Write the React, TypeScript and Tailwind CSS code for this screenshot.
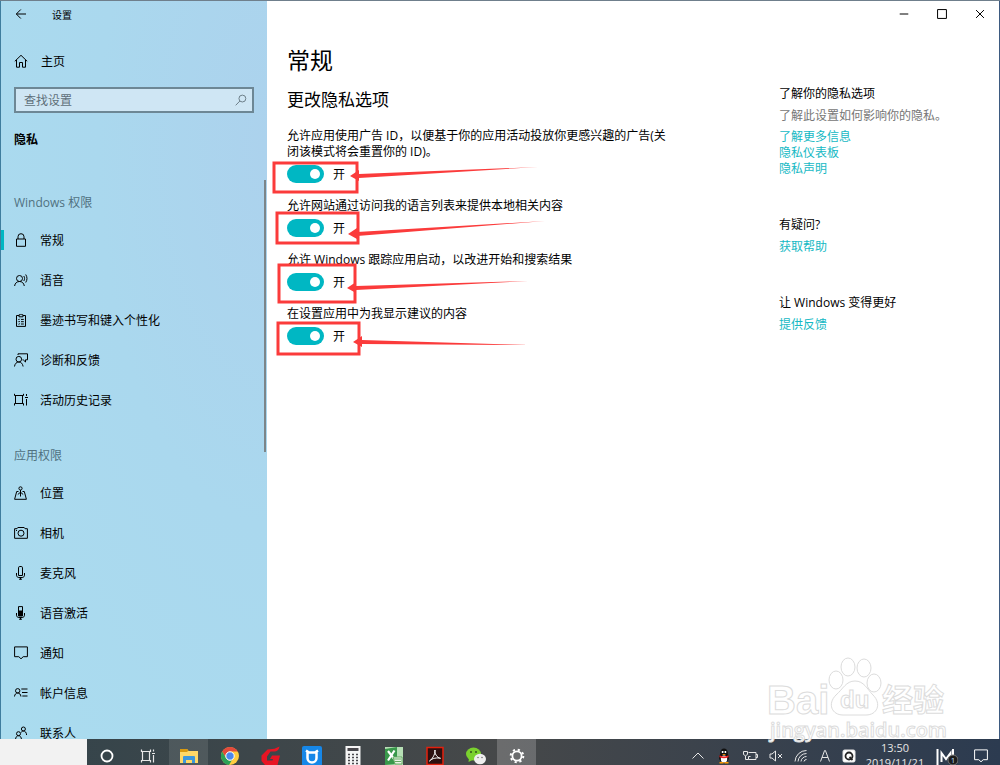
import { useState } from "react";
import type { ReactNode } from "react";

function Icon({ children, size = 14 }: { children: ReactNode; size?: number }) {
  return (
    <svg
      width={size}
      height={size}
      viewBox="0 0 14 14"
      fill="none"
      stroke="currentColor"
      strokeWidth="1"
      className="shrink-0"
      aria-hidden="true"
    >
      {children}
    </svg>
  );
}

const icons = {
  back: <path d="M12 7H2.500M6.800 2.500 2.300 7l4.500 4.500" />,
  home: <path d="M.8 7.300 7 1.300l6.200 6M2.500 6v7.200h3V8.500h3v4.700h3V6" />,
  lock: <path d="M2.500 6h9v7.300h-9zM4 6V3.700a3 3 0 0 1 6 0V6" />,
  speech: (
    <path d="M5.500 8.500a3 3 0 1 0 0-6 3 3 0 0 0 0 6ZM.6 13c.3-2.800 2.300-4.500 4.900-4.500s4.400 1.700 4.800 4.500M9.800 3c1 1.600 1 3.400 0 5M11.700 1.500c1.700 2.600 1.700 5.400 0 8" />
  ),
  clipboard: (
    <path d="M5 2.500H2.500v10.900h9V2.500H9M5 1.800h1.200a.9.900 0 0 1 1.600 0H9v2H5zM4.300 6.200l.6.600.8-1M4.300 8.500l.6.600.8-1M4.300 10.800l.6.600.8-1M7 6.400h2.800M7 8.700h2.800M7 11h2.800" />
  ),
  feedback: (
    <path d="M4.800 9a2.800 2.800 0 1 0 0-5.600 2.800 2.800 0 0 0 0 5.600ZM.5 13.500C.8 10.800 2.500 9 4.800 9s3.900 1.700 4.300 4.500M4 2V.8h9.500v6h-2V9L9.200 6.800H8.500" />
  ),
  timeline: (
    <path d="M.5.8v1.700h9V.8M1.500 2.500v8M8.500 2.500v8M.5 12.500v-2h9v2M12.500 1v2M12.500 6v6.500M11 4.500h3" />
  ),
  location: (
    <path d="M6.500 4a1.600 1.600 0 1 0 0-3.200 1.600 1.600 0 0 0 0 3.200ZM6.500 4v6.500M4.500 5.500H2.700L.6 13.300h11.800l-2.100-7.800H8.500M3.800 8.500l2.700-2.300 2.700 2.300" />
  ),
  camera: (
    <path d="M.6 2.700H3l.8-1.200h6.400l.8 1.200h2.400v9.600H.6zM7 10.200a3 3 0 1 0 0-6 3 3 0 0 0 0 6ZM2 4.500h1" />
  ),
  mic: (
    <path d="M4.500 1.800q0-1.300 1.300-1.300h1.400q1.300 0 1.300 1.300v7.700h-4zM2.500 7v2.200c0 1.200.9 2.300 2.300 2.300h3.400c1.400 0 2.300-1.100 2.300-2.300V7M6.500 11.500v2M5 13.200h3" />
  ),
  voice: (
    <>
      <path d="M4.500.6h4v8.900h-4zM2.500 7v2.200c0 1.200.9 2.300 2.300 2.300h3.400c1.400 0 2.300-1.100 2.300-2.300V7M6.500 11.500v2M5 13.200h3" />
      <path d="M4.500 5h4v5h-4z" fill="currentColor" />
    </>
  ),
  message: <path d="M.6.900h12.800v9.800H9.200L7 12.800l-2.200-2.100H.6z" />,
  account: (
    <path d="M3.700 7a2.200 2.200 0 1 0 0-4.400 2.200 2.200 0 0 0 0 4.400ZM.5 10.500C.7 8.300 2 7 3.700 7s3 1.300 3.200 3.500M7.300 3H13.500M8 6.500h5.500M8.300 10h5.200" />
  ),
  people: (
    <path d="M4.500 9.700a2 2 0 1 0 0-4 2 2 0 0 0 0 4ZM1.500 13.500c.2-2.400 1.300-3.800 3-3.800s2.800 1.400 3 3.800M9.400 5a2 2 0 1 0 0-4 2 2 0 0 0 0 4ZM7 6.500C7.600 5.500 8.400 5 9.400 5c1.900 0 3 1.500 3.200 4" />
  ),
};

type IconName = keyof typeof icons;

const groups: { title: string; items: { icon: IconName; label: string }[] }[] = [
  {
    title: "Windows 权限",
    items: [
      { icon: "lock", label: "常规" },
      { icon: "speech", label: "语音" },
      { icon: "clipboard", label: "墨迹书写和键入个性化" },
      { icon: "feedback", label: "诊断和反馈" },
      { icon: "timeline", label: "活动历史记录" },
    ],
  },
  {
    title: "应用权限",
    items: [
      { icon: "location", label: "位置" },
      { icon: "camera", label: "相机" },
      { icon: "mic", label: "麦克风" },
      { icon: "voice", label: "语音激活" },
      { icon: "message", label: "通知" },
      { icon: "account", label: "帐户信息" },
      { icon: "people", label: "联系人" },
    ],
  },
];

const options = [
  "允许应用使用广告 ID，以便基于你的应用活动投放你更感兴趣的广告(关闭该模式将会重置你的 ID)。",
  "允许网站通过访问我的语言列表来提供本地相关内容",
  "允许 Windows 跟踪应用启动，以改进开始和搜索结果",
  "在设置应用中为我显示建议的内容",
];

function Sidebar() {
  const [active, setActive] = useState("常规");

  return (
    <aside className="flex w-[267px] shrink-0 flex-col border-l border-[#3f7d9e] bg-[radial-gradient(ellipse_at_100%_20%,#acd2ed_0%,#aad8ee_45%,#aadcef_100%)]">
      <header className="flex h-[26px] items-center pl-[13px]">
        <button aria-label="返回">
          <Icon>{icons.back}</Icon>
        </button>
        <span className="ml-6 pt-0.5 text-[10px]">设置</span>
      </header>
      <a href="#home" className="mt-[14px] flex h-10 items-center gap-[13px] pl-[13px]">
        <Icon>{icons.home}</Icon>
        <span className="pt-0.5">主页</span>
      </a>
      <div className="mx-[13px] mt-[6px] flex h-[26px] shrink-0 items-center border-2 border-[#6d8795] bg-[#cfe6f4] pr-[5px] pl-2 text-[#5e6f79]">
        <input
          type="search"
          aria-label="查找设置"
          placeholder="查找设置"
          className="min-w-0 flex-1 bg-transparent pt-0.5 outline-none placeholder:text-[#5e6f79]"
        />
        <Icon size={12}>
          <path d="M8.600 9.300a4 4 0 1 0 0-8 4 4 0 0 0 0 8ZM5.700 8.200.8 13.200" />
        </Icon>
      </div>
      <h2 className="mt-[6px] flex h-10 shrink-0 items-center pt-0.5 pl-[13px] font-bold">隐私</h2>
      <div className="mt-[21px] flex min-h-0 flex-1 overflow-hidden">
        <nav className="flex-1">
          {groups.map((group) => (
            <section key={group.title} className="mb-[13px]">
              <h3 className="flex h-10 items-center pt-1.5 pl-[13px] text-[#50717f]">{group.title}</h3>
              {group.items.map((item) => (
                <button
                  key={item.label}
                  onClick={() => setActive(item.label)}
                  className="flex h-10 w-full items-center"
                >
                  <span className={item.label === active ? "h-5 w-[3px] bg-[#00b7c3]" : "h-5 w-[3px]"} />
                  <span className="ml-[10px]">
                    <Icon>{icons[item.icon]}</Icon>
                  </span>
                  <span className="ml-3 pt-0.5">{item.label}</span>
                </button>
              ))}
            </section>
          ))}
        </nav>
        <div className="mr-px h-[272px] w-[2px] bg-[#7c8589]" />
      </div>
    </aside>
  );
}

function Toggle({ label }: { label: string }) {
  const [on, setOn] = useState(true);

  return (
    <label className="mb-[10px] flex h-7 items-center gap-[9px]">
      <input
        type="checkbox"
        role="switch"
        aria-label={label}
        checked={on}
        onChange={() => setOn(!on)}
        className="flex h-[18px] w-[37px] appearance-none items-center rounded-full bg-[#767676] px-1 before:size-[10px] before:rounded-full before:bg-white before:content-[''] checked:justify-end checked:bg-[#00b7c3]"
      />
      <span className="pt-0.5">{on ? "开" : "关"}</span>
    </label>
  );
}

const marks = [
  { x: 274, y: 163, w: 83, h: 29, tip: [350, 176], end: [538, 167] },
  { x: 277, y: 213, w: 81, h: 30, tip: [348, 234], end: [545, 221] },
  { x: 279, y: 265, w: 76, h: 37, tip: [347, 288], end: [528, 281] },
  { x: 278, y: 323, w: 81, h: 31, tip: [353, 342], end: [529, 345] },
];

// hand-drawn highlight boxes and arrows over the switches
function Marks() {
  return (
    <svg
      className="pointer-events-none absolute top-0 left-0"
      width="300"
      height="380"
      viewBox="267 1 300 380"
      aria-hidden="true"
    >
      {marks.map(({ x, y, w, h, tip: [tx, ty], end: [ex, ey] }) => (
        <g key={y} fill="#fb3b3b">
          <rect x={x} y={y} width={w} height={h} fill="none" stroke="#fb3b3b" strokeWidth="3" />
          <path
            d={`M${tx} ${ty}L${tx + 9} ${ty - 6}L${tx + 9} ${ty - 2}L${ex} ${ey}L${tx + 9} ${ty + 2}L${tx + 9} ${ty + 5}Z`}
          />
        </g>
      ))}
    </svg>
  );
}

function Help() {
  return (
    <div className="mt-[59px] flex w-[220px] shrink-0 flex-col leading-4">
      <h3>了解你的隐私选项</h3>
      <p className="mt-[6px] text-[#767676]">了解此设置如何影响你的隐私。</p>
      <div className="mt-[5px] flex flex-col items-start text-[#15b9c4]">
        <a href="#more">了解更多信息</a>
        <a href="#dashboard">隐私仪表板</a>
        <a href="#statement">隐私声明</a>
      </div>
      <h3 className="mt-10">有疑问?</h3>
      <a href="#help" className="mt-[6px] self-start text-[#15b9c4]">
        获取帮助
      </a>
      <h3 className="mt-10">让 Windows 变得更好</h3>
      <a href="#feedback" className="mt-[6px] self-start text-[#15b9c4]">
        提供反馈
      </a>
    </div>
  );
}

function Content() {
  return (
    <main className="relative flex min-w-0 flex-1 flex-col border-r border-[#3d5a80] bg-white">
      <div className="flex h-[26px] justify-end">
        <button aria-label="最小化" className="flex w-[38px] items-center justify-center">
          <Icon size={10}>
            <path d="M1 7h12" strokeWidth="1.400" />
          </Icon>
        </button>
        <button aria-label="最大化" className="flex w-[38px] items-center justify-center">
          <Icon size={10}>
            <path d="M.8.800h12.400v12.400H.8z" strokeWidth="1.400" />
          </Icon>
        </button>
        <button aria-label="关闭" className="flex w-[38px] items-center justify-center">
          <Icon size={10}>
            <path d="m1.500 1.500 11 11m0-11-11 11" strokeWidth="1.400" />
          </Icon>
        </button>
      </div>
      <div className="flex justify-between pl-5">
        <div className="w-[384px] pt-[17px]">
          <h1 className="text-[23px] leading-8">常规</h1>
          <h2 className="mt-3 text-[17px] leading-6">更改隐私选项</h2>
          <div className="mt-4 leading-4">
            {options.map((text) => (
              <div key={text}>
                <p>{text}</p>
                <Toggle label={text} />
              </div>
            ))}
          </div>
        </div>
        <Help />
      </div>
      <Marks />
    </main>
  );
}

const apps: { name: string; art: ReactNode }[] = [
  {
    name: "Cortana",
    art: <circle cx="10" cy="10" r="5.500" fill="none" stroke="#fff" strokeWidth="1.800" />,
  },
  {
    name: "任务视图",
    art: (
      <path
        d="M3.500 3.500v2h9v-2M4.500 5.500v9M11.500 5.500v9M3.500 16.500v-2h9v2M15.500 3.500v2M15.500 9v7.500M14 7.500h3"
        fill="none"
        stroke="#e8e8e8"
        strokeWidth="1.200"
      />
    ),
  },
  {
    name: "文件资源管理器",
    art: (
      <>
        <path d="M1 3h7l1.500 2H19v12H1z" fill="#ffd867" />
        <path d="M1 3h7l1.500 1.500L8 6H1z" fill="#d99a10" />
        <path d="M4 17v-6q0-1 1-1h10q1 0 1 1v6h-3v-3H7v3z" fill="#3d97dc" />
      </>
    ),
  },
  {
    name: "Chrome",
    art: (
      <>
        <circle cx="10" cy="10" r="9" fill="#ffcd40" />
        <path d="M2.200 5.500A9 9 0 0 1 17.800 5.500H10a4.500 4.500 0 0 0-4 6.700z" fill="#e34a3c" />
        <path d="M2.200 5.500 6.100 12.200A4.500 4.500 0 0 0 12 14l-3 5A9 9 0 0 1 2.200 5.500z" fill="#2ca158" />
        <circle cx="10" cy="10" r="4.200" fill="#4b87ee" stroke="#fff" />
      </>
    ),
  },
  {
    name: "网易云音乐",
    art: (
      <path
        d="M18.500.5c-.5 3-2 4.500-4.500 5H9.500L6 10.500v4h5.500l.5-1.500H9l2-3.500h8L16.500 19H4l-3.500-4V9.500L6.500 3.500l7-.8z"
        fill="#e81524"
      />
    ),
  },
  {
    name: "UC",
    art: (
      <>
        <rect x="0" y="0" width="20" height="20" rx="2" fill="#1687e8" />
        <path d="M5.500 6v6a4.500 4.500 0 0 0 9 0V6M4 4.500l3 2h6l3-2" fill="none" stroke="#fff" strokeWidth="2.500" />
      </>
    ),
  },
  {
    name: "计算器",
    art: (
      <>
        <path d="M2.500 0h15v20h-15z" fill="#f5f5f5" />
        <path d="M4.500 2h11v3h-11z" fill="#49474c" />
        <path d="M5 8.500h10M5 11.500h10M5 14.500h10M5 17.500h10" stroke="#49474c" strokeWidth="1.500" strokeDasharray="2 2" />
      </>
    ),
  },
  {
    name: "Excel",
    art: (
      <>
        <path d="M1 1h18v18H1z" fill="#b6dfb5" />
        <path d="M1 3 13 1v17L1 19z" fill="#39984b" />
        <path d="m4 5 7 9M10.500 4.500 4 14.500" stroke="#fff" strokeWidth="2.200" />
        <path d="M9 11h9v7h-7z" fill="#e9f6e6" stroke="#65a962" />
        <path d="M10 13h7M11 15.500h6" stroke="#65a962" />
      </>
    ),
  },
  {
    name: "Acrobat",
    art: (
      <>
        <path d="M2 1.500h16v17H2z" fill="#2c1010" stroke="#e3200d" strokeWidth="1.500" />
        <path
          d="M4.500 15c2-1 6-6.500 5.500-11-.8 3 2 8 5.500 8.300C12.500 11.500 7 12 4.500 15Z"
          fill="none"
          stroke="#fff"
        />
      </>
    ),
  },
  {
    name: "微信",
    art: (
      <>
        <ellipse cx="7.500" cy="8" rx="7.500" ry="6.500" fill="#7ad12e" />
        <path d="m3 12-.5 4 4-2z" fill="#7ad12e" />
        <circle cx="5" cy="6" r="1" fill="#35551c" />
        <circle cx="10" cy="6" r="1" fill="#35551c" />
        <ellipse cx="14" cy="13" rx="6" ry="5.300" fill="#efefef" />
        <circle cx="12" cy="11.500" r=".8" fill="#777" />
        <circle cx="16" cy="11.500" r=".8" fill="#777" />
      </>
    ),
  },
  {
    name: "设置",
    art: (
      <g fill="none" stroke="#fff">
        <circle cx="10" cy="10" r="4.600" strokeWidth="1.800" />
        <circle cx="10" cy="10" r="6.300" strokeWidth="2" strokeDasharray="2.200 2.748" />
      </g>
    ),
  },
];

const tray: { name: string; wide: boolean; art: ReactNode }[] = [
  { name: "显示隐藏的图标", wide: true, art: <path d="m2.500 10.500 5.500-5.500 5.500 5.500" /> },
  {
    name: "QQ",
    wide: true,
    art: (
      <g stroke="none">
        <ellipse cx="8" cy="9.500" rx="5" ry="5" fill="#111" />
        <ellipse cx="8" cy="5" rx="3.800" ry="4.500" fill="#111" />
        <ellipse cx="8" cy="11" rx="3.200" ry="3.500" fill="#fff" />
        <path d="M5.800 3h1.600v2H5.800zM8.600 3h1.600v2H8.600z" fill="#fff" />
        <path d="M3.500 7.200q4.500 2.500 9 0v2q-4.500 2-9 0z" fill="#e22" />
        <path d="M6 6h4l-2 1.200zM3.500 14h4v1.500h-4zM8.500 14h4v1.500h-4z" fill="#f90" />
      </g>
    ),
  },
  {
    name: "电池",
    wide: true,
    art: <path d="M6.500 4.500H14v7H6.500M14 6.500h1.500v3H14M1.500 3.500h4v3q-2 2.500-4 0zM3.500 8v3.500h3v-3h2" />,
  },
  { name: "音量", wide: true, art: <path d="M2 6h2l3.500-3v10L4 10H2zM10 6l4 4M14 6l-4 4" /> },
  {
    name: "网络",
    wide: false,
    art: <path d="M2 13.500A11.500 11.500 0 0 1 13.500 2.500M5 13.500a8.500 8.500 0 0 1 8.500-8M8 13.500a5.500 5.500 0 0 1 5.500-5M11 13.500a2.500 2.500 0 0 1 2.500-2" />,
  },
  { name: "输入法", wide: false, art: <path d="M3.500 13.500 7.600 2.500h.8l4.100 11M5 9.500h6" /> },
  {
    name: "QuickTime",
    wide: false,
    art: (
      <>
        <rect x="2" y="2" width="12" height="12" rx="1.500" fill="#fff" />
        <circle cx="8" cy="8" r="3.500" stroke="#222" strokeWidth="1.800" />
        <path d="m8.500 9 3 3" stroke="#222" strokeWidth="1.800" />
      </>
    ),
  },
];

function Taskbar() {
  return (
    <footer className="flex h-[26px] shrink-0 items-start overflow-hidden bg-linear-to-r from-[#33444b] via-[#464849] to-[#2c3b50] text-white">
      <div className="h-[34px] w-[87px] shrink-0 bg-[#f2f2f2]" />
      <div className="flex gap-[2px]">
        {apps.map((app) => (
          <button
            key={app.name}
            aria-label={app.name}
            className={
              app.name === "设置"
                ? "flex h-[34px] w-[39px] items-center justify-center bg-white/20"
                : app.name === "文件资源管理器"
                  ? "flex h-[34px] w-[39px] items-center justify-center bg-white/10"
                  : "flex h-[34px] w-[39px] items-center justify-center"
            }
          >
            <svg width="20" height="20" viewBox="0 0 20 20" aria-hidden="true">
              {app.art}
            </svg>
          </button>
        ))}
      </div>
      <div className="ml-auto flex">
        {tray.map((item) => (
          <button
            key={item.name}
            aria-label={item.name}
            className={
              item.wide
                ? "flex h-[34px] w-[26px] items-center justify-center"
                : "flex h-[34px] w-6 items-center justify-center"
            }
          >
            <svg width="16" height="16" viewBox="0 0 16 16" fill="none" stroke="#e6e6e6" aria-hidden="true">
              {item.art}
            </svg>
          </button>
        ))}
        <time className="flex w-[68px] flex-col items-center pt-px text-[11px] leading-[15px] text-[#e6e6e6]">
          <span>13:50</span>
          <span>2019/11/21</span>
        </time>
        <button aria-label="Malwarebytes" className="flex h-[34px] w-[33px] items-center justify-center">
          <svg width="24" height="18" viewBox="0 0 24 18" aria-hidden="true">
            <path d="M3.500 2v16M7.500 15V6l4.500 6 4.500-6v9M19 2v10" fill="none" stroke="#fff" strokeWidth="2" />
            <circle cx="19" cy="13" r="5" fill="#1c1c1c" stroke="#777" />
            <text x="19" y="16" fontSize="8" textAnchor="middle" fill="#b5dcff">
              1
            </text>
          </svg>
        </button>
        <button aria-label="通知" className="flex h-[34px] w-[38px] items-center justify-center">
          <Icon size={14}>{icons.message}</Icon>
        </button>
      </div>
    </footer>
  );
}

function Watermark() {
  return (
    <svg
      className="pointer-events-none absolute right-[50px] bottom-[20px]"
      width="184"
      height="90"
      viewBox="0 0 184 90"
      fill="#fff"
      stroke="#dcdcdc"
      strokeWidth="1"
      aria-hidden="true"
    >
      <g fontFamily="Liberation Sans, sans-serif" fontWeight="700">
        <text x="1" y="59" fontSize="40">
          Bai
        </text>
        <text x="116" y="56" fontSize="31" fontFamily="Noto Sans CJK SC, sans-serif">
          经验
        </text>
      </g>
      <text x="4" y="82" fontSize="20" fontFamily="Open Sans, sans-serif" fontWeight="600">
        jingyan.baidu.com
      </text>
      <ellipse cx="70" cy="25" rx="7" ry="9" />
      <ellipse cx="82" cy="12" rx="7" ry="9" />
      <ellipse cx="98" cy="13" rx="7" ry="9" />
      <ellipse cx="108" cy="28" rx="7" ry="9" />
      <path d="M89 26c9 0 12 8 18 14 9 9 4 20-7 20H77c-11 0-16-11-7-20 7-6 10-14 19-14Z" />
      <text x="74" y="53" fontSize="24" fontFamily="Liberation Sans, sans-serif" fontWeight="700">
        du
      </text>
    </svg>
  );
}

export default function App() {
  return (
    <div className="relative flex h-screen flex-col overflow-hidden border-t border-[#6f7f8c] font-['Open_Sans','Noto_Sans_CJK_SC',sans-serif] text-[12px] text-black">
      <div className="flex min-h-0 flex-1">
        <Sidebar />
        <Content />
      </div>
      <Taskbar />
      <Watermark />
    </div>
  );
}
